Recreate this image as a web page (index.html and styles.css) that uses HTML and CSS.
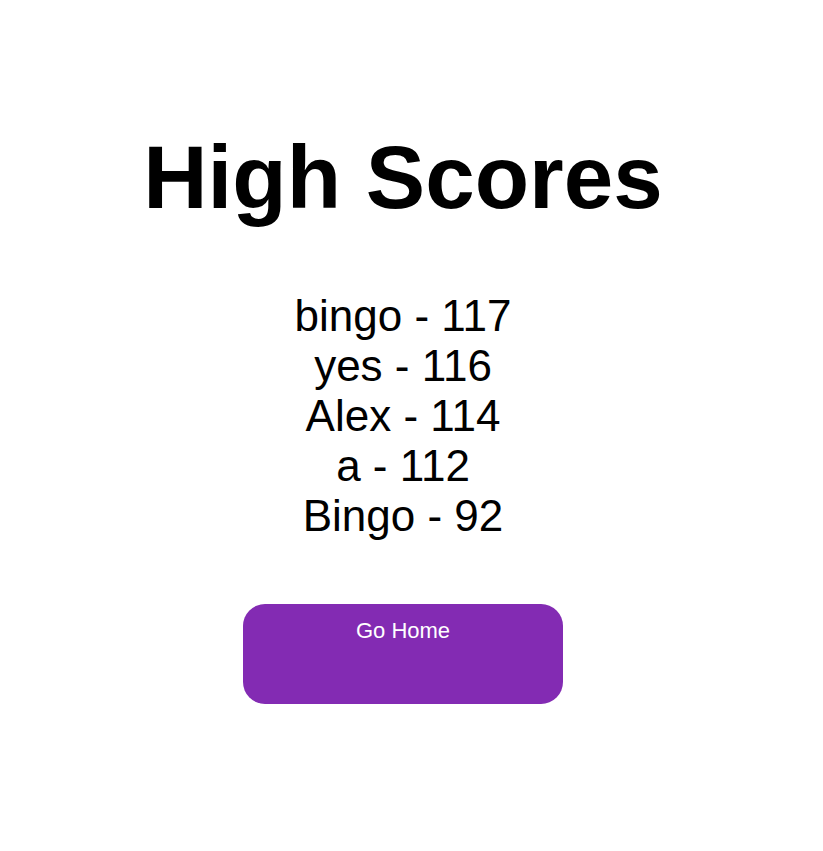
FILE: index.html
```html
<!DOCTYPE html>
<html>
<head>
<meta charset="utf-8">
<title>High Scores</title>
<link rel="stylesheet" href="styles.css">
</head>
<body>
<main class="page">
  <h1 class="title">High Scores</h1>
  <ul class="scores">
    <li>bingo - 117</li>
    <li>yes - 116</li>
    <li>Alex - 114</li>
    <li>a - 112</li>
    <li>Bingo - 92</li>
  </ul>
  <a class="home-btn" href="#">Go Home</a>
</main>
</body>
</html>
```
FILE: styles.css
```css
html, body {
  margin: 0;
  padding: 0;
  background: #ffffff;
}
body {
  font-family: "Liberation Sans", Arial, sans-serif;
  color: #000;
}
.page {
  display: flex;
  flex-direction: column;
  align-items: center;
  padding-top: 126px;
  padding-right: 17px;
}
.title {
  margin: 0;
  font-size: 89px;
  font-weight: bold;
  line-height: normal;
}
.scores {
  list-style: none;
  margin: 62px 0 0 0;
  padding: 0;
  font-size: 44px;
  line-height: normal;
  text-align: center;
}
.home-btn {
  margin-top: 63px;
  width: 320px;
  height: 100px;
  box-sizing: border-box;
  padding-top: 14px;
  background: #832bb3;
  border-radius: 22px;
  color: #fff;
  text-decoration: none;
  text-align: center;
  font-size: 22px;
  line-height: normal;
}
```
